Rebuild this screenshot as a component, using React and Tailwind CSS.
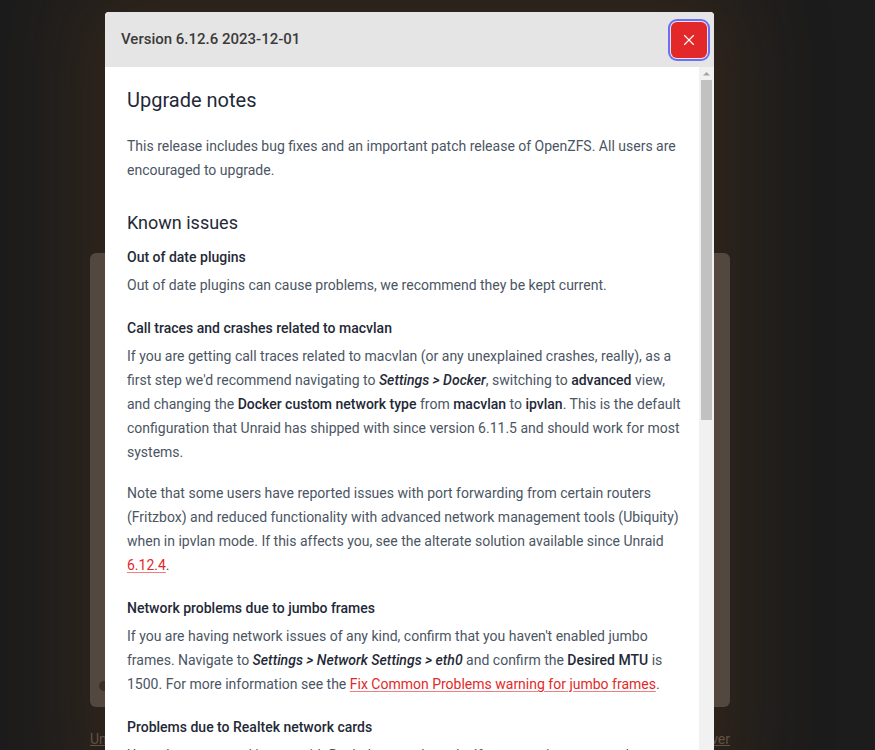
import React from 'react';
import { X } from 'lucide-react';

const font = { fontFamily: 'Roboto, "Liberation Sans", sans-serif' };

const Link = ({ children }) => (
    <a href="#" className="text-[#e22828] underline decoration-[#f08080] underline-offset-2">{children}</a>
);

const B = ({ children }) => <strong className="font-medium text-[#1f2937]">{children}</strong>;
const BI = ({ children }) => <strong className="font-medium italic text-[#1f2937]">{children}</strong>;

const ReleaseNotes = () => (
    <div className="pl-[22px] pr-[14px] pt-[18px] pb-10 text-[14px] leading-[24px] text-[#4b5563]">
        <h1 className="text-[20px] leading-[30px] font-normal text-[#1f2937]">Upgrade notes</h1>
        <p className="mt-[19px]">
            This release includes bug fixes and an important patch release of OpenZFS. All users are encouraged to upgrade.
        </p>

        <h2 className="mt-[27px] text-[18px] leading-[28px] font-normal text-[#1f2937]">Known issues</h2>
        <h3 className="mt-[8px] font-medium text-[#1f2937]">Out of date plugins</h3>
        <p className="mt-[4px]">Out of date plugins can cause problems, we recommend they be kept current.</p>

        <h3 className="mt-[19px] font-medium text-[#1f2937]">Call traces and crashes related to macvlan</h3>
        <p className="mt-[4px]">
            If you are getting call traces related to macvlan (or any unexplained crashes, really), as a first step we'd
            recommend navigating to <BI>Settings &gt; Docker</BI>, switching to <B>advanced</B> view, and changing the{' '}
            <B>Docker custom network type</B> from <B>macvlan</B> to <B>ipvlan</B>. This is the default configuration that
            Unraid has shipped with since version 6.11.5 and should work for most systems.
        </p>
        <p className="mt-[17px]">
            Note that some users have reported issues with port forwarding from certain routers (Fritzbox) and reduced
            functionality with advanced network management tools (Ubiquity) when in ipvlan mode. If this affects you, see
            the alterate solution available since Unraid <Link>6.12.4</Link>.
        </p>

        <h3 className="mt-[19px] font-medium text-[#1f2937]">Network problems due to jumbo frames</h3>
        <p className="mt-[4px]">
            If you are having network issues of any kind, confirm that you haven't enabled jumbo frames. Navigate to{' '}
            <BI>Settings &gt; Network Settings &gt; eth0</BI> and confirm the <B>Desired MTU</B> is 1500. For more
            information see the <Link>Fix Common Problems warning for jumbo frames</Link>.
        </p>

        <h3 className="mt-[19px] font-medium text-[#1f2937]">Problems due to Realtek network cards</h3>
        <p className="mt-[4px]">
            Users have reported issues with Realtek network cards. If you experience network problems, try the in-tree
            driver instead of the vendor driver.
        </p>
    </div>
);

// static scrollbar rail drawn beside the notes
const ScrollRail = () => (
    <div className="flex w-[15px] shrink-0 flex-col items-center bg-[#f1f1f1]">
        <svg width="15" height="13" viewBox="0 0 15 13" className="shrink-0">
            <path d="M4 8.5 L7.5 5 L11 8.5 Z" fill="#a3a3a3" />
        </svg>
        <div className="h-[340px] w-[11px] bg-[#c1c1c1]" />
    </div>
);

export default function App() {
    return (
        <div className="relative h-[750px] w-[875px] overflow-hidden bg-[#1c1c1c]" style={font}>
            {/* dimmed dashboard underneath */}
            <div className="w-[640px] ml-[90px] pt-[253px]">
                <div className="relative h-[454px] rounded-md bg-[#4d4946]">
                    <span className="absolute left-[9px] bottom-[16px] h-[10px] w-[10px] rounded-full bg-[#2e2a27]" />
                </div>
                <div className="mt-[22px] flex justify-between text-[14px] text-[#5d554e]">
                    <span className="underline">Unraid</span>
                    <span className="underline">Server</span>
                </div>
            </div>

            {/* changelog modal */}
            <div className="absolute left-[105px] top-[12px] flex h-[760px] w-[609px] flex-col overflow-hidden rounded-t-[4px] bg-white shadow-[0_0_90px_30px_rgba(120,72,30,0.24)]">
                <div className="flex h-[55px] shrink-0 items-center justify-between bg-[#e5e5e5] pl-[16px] pr-[7px]">
                    <span className="text-[15px] font-medium text-[#3b3b3b]">Version 6.12.6 2023-12-01</span>
                    <button className="flex h-[36px] w-[36px] items-center justify-center rounded-[6px] bg-[#e22828] text-white ring-2 ring-[#6d6ef5] ring-offset-1 ring-offset-[#e5e5e5]">
                        <X size={18} strokeWidth={1.5} />
                    </button>
                </div>
                <div className="flex min-h-0 flex-1">
                    <div className="flex-1 overflow-hidden">
                        <ReleaseNotes />
                    </div>
                    <ScrollRail />
                </div>
            </div>
        </div>
    );
}
